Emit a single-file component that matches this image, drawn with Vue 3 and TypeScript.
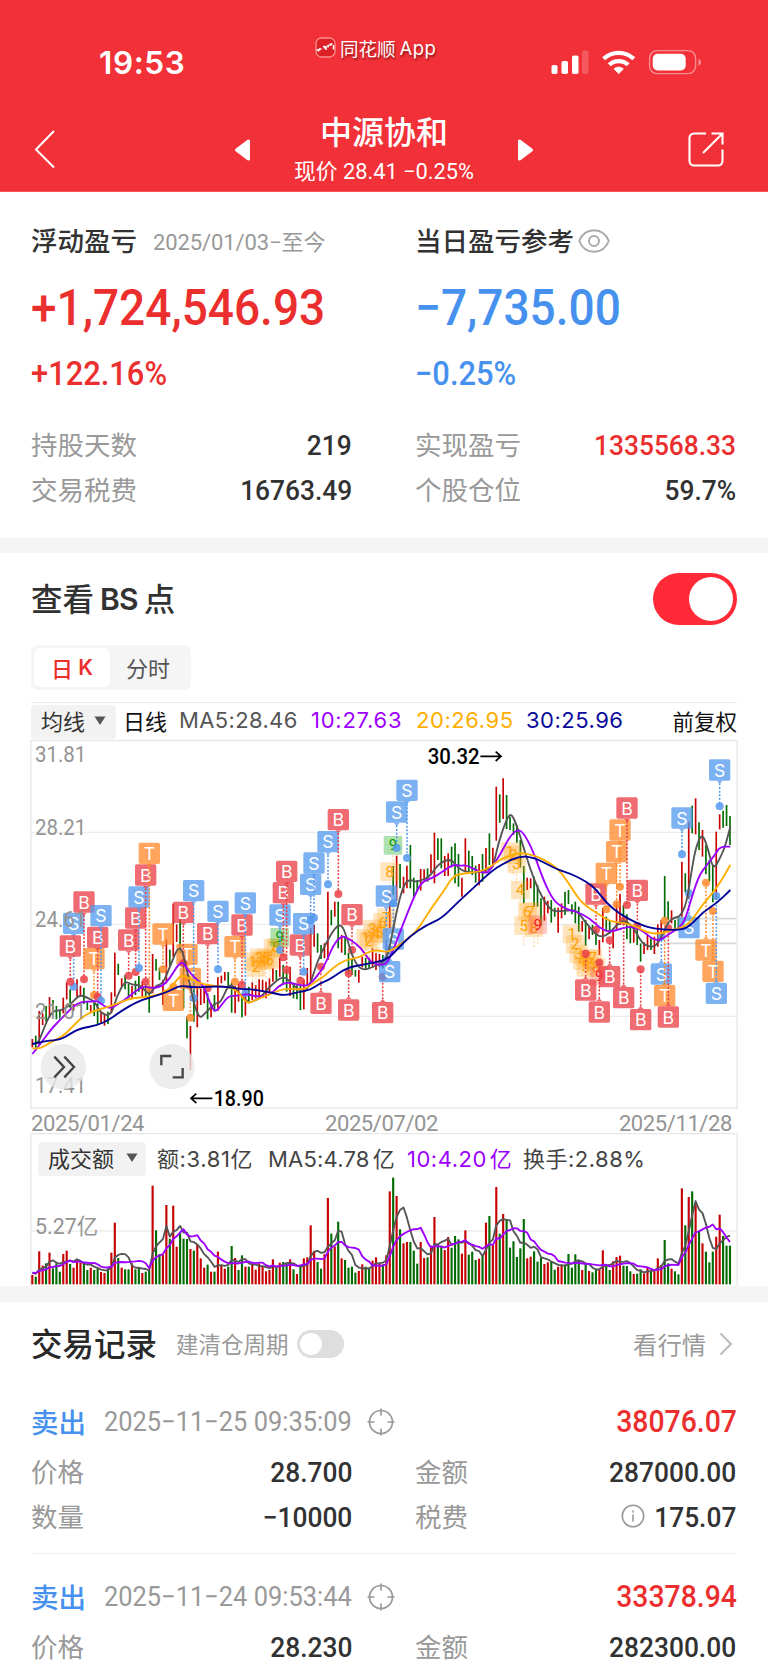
<script setup lang="ts">
type Pt = [number, number]
type Side = 'R' | 'G'
interface Marker { kind: 'B' | 'S' | 'T'; x: number; y: number; dot: number }
interface Count { n: number; x: number; y: number; tone: 'amber' | 'green' | 'red' }
interface TradeRecord { time: string; profit: string; price: string; amount: string; qty?: string; fee?: string }

// One bar every 10.31 chart units; three units make one CSS pixel.
const barX = (i: number): number => 37 + 10.31 * i

const candleText = `R927-952 G917-962 R843-945 R850-885 G828-875 R801-862 G810-855 G828-868 G842-868 R803-850
R757-808 G778-833 R822-842 R748-800 R767-795 G773-822 G815-840 R825-845 G815-858 G820-885
R845-882 R855-887 G845-882 R787-850 R668-800 G701-735 R745-770 G735-778 G762-805 R768-805
G752-795 G738-785 R753-800 G763-798 G768-848 R672-790 G687-722 G713-750 R750-825 R628-760
G659-708 R522-680 R583-636 G541-670 G675-835 G860-925 R888-1020 G758-875 R770-892 R775-825
R775-820 G790-868 R820-862 G795-845 R742-842 R737-760 R726-752 G726-770 G757-848 R768-850
R762-815 G800-862 R775-857 G770-820 R757-810 R765-805 R748-808 R750-785 R755-805 R745-790
R715-755 G720-750 R684-740 G705-765 G718-785 R710-798 G760-805 G765-808 G768-840 R748-838
R714-765 R595-755 R585-650 G610-668 G645-687 R640-685 R485-690 G540-586 R515-560 G515-655
R615-668 G620-675 G668-730 G685-735 G720-740 R720-758 R680-712 G684-720 G683-715 R655-710
R670-720 R672-712 G675-715 R630-712 R487-595 G408-495 R377-512 G402-475 R440-490 R407-475
G345-475 G443-500 G450-485 R417-482 R418-450 G415-455 R373-430 R308-460 G325-390 G325-415
R378-438 R370-438 G350-412 G340-460 G372-470 R443-500 R325-425 G362-430 G378-435 G407-458
R402-466 G372-455 R354-430 G310-405 R353-410 R170-332 G193-278 R145-267 G195-297 G260-300
G280-315 G285-338 G330-413 G408-520 R443-480 R445-475 G440-530 G465-530 G505-587 R500-572
R512-550 G510-578 G533-560 R533-608 R520-565 G485-555 G480-522 G523-553 G515-580 G530-605
R573-605 G570-647 R590-628 G585-615 G597-645 R630-675 R534-637 G560-600 G570-612 R595-655
R520-602 R492-585 G525-570 G553-628 G585-640 R590-638 G585-645 G640-695 R637-672 R615-660
G625-660 R620-672 R583-650 R570-625 G438-565 G514-570 R541-580 G570-597 G565-600 R395-560
G430-487 R275-505 G227-310 R205-313 G277-360 R300-380 G345-433 G390-455 G405-517 R305-510
R253-298 G242-293 G225-288 G258-345`
const candles = candleText.split(/\s+/).map((t, i) => {
  const [hi, lo] = t.slice(1).split('-').map(Number)
  return { x: barX(i), hi, lo, side: t[0] as Side }
})

const volumeText = `R525 G530 R454 R497 G490 R458 G505 G490 G515 R462 R452 G492 R503 R480 R487 G490 G510 R503 G510 G505
R516 R519 G505 R458 R368 G474 R503 G508 G508 R490 G508 G503 R519 G515 G512 R257 G391 G462 R465 R315
G416 R317 R440 G400 G416 G417 R447 G452 R435 R475 R503 G494 R515 G515 R455 R497 R506 G500 G438 R474
G510 G466 R500 G500 R492 R509 R490 R500 R514 R510 R478 G503 R488 G486 G490 R478 G508 R522 G500 R475
R472 R376 R453 G486 G506 R463 R294 G401 R440 G365 R475 G480 G503 G500 G518 R513 R493 G500 G503 R482
R472 R490 G493 R466 R274 G233 R288 G388 R430 R426 G426 G452 G491 R426 R474 G472 R437 R351 G434 G437
R450 R411 G443 G408 G418 R461 R391 G464 G455 G480 R476 G468 R368 G348 R435 R261 G401 R342 G358 G443
G424 G471 G445 G357 R475 R470 G454 G485 G474 R492 R487 G485 G509 R500 R497 G494 G462 G503 G463 G482
R510 G492 R513 G517 G510 R508 R451 G496 G510 R484 R471 R467 G497 G498 G514 R522 G521 G508 R520 R502
G514 R512 R475 R495 G420 G490 R506 G514 G523 R265 G376 R291 G274 R310 G392 R430 G455 G487 G455 R410
R344 G408 G437 G437`
const volumes = volumeText.split(/\s+/).map((t, i) => ({ x: barX(i), top: Number(t.slice(1)), side: t[0] as Side }))

function average(span: number): string {
  return volumes
    .map((v, i) => {
      let sum = 0
      for (let k = i - span + 1; k <= i; k++) sum += k < 0 ? 517 : volumes[k].top
      return `${v.x.toFixed(1)},${(sum / span).toFixed(1)}`
    })
    .join(' ')
}
const volMa5 = average(5)
const volMa10 = average(10)

function parse(dx: number, text: string): Pt[] {
  return text.split(' ').map((p) => {
    const [x, y] = p.split(',').map(Number)
    return [x + dx, y]
  })
}
// Quadratic segments through the midpoints keep the averages smooth.
function curve(left: string, mid: string, right: string): string {
  const pts = [...parse(0, left), ...parse(690, mid), ...parse(1410, right)].sort((a, b) => a[0] - b[0])
  let d = `M${pts[0][0]} ${pts[0][1]}`
  for (let i = 1; i < pts.length - 1; i++) {
    const mx = (pts[i][0] + pts[i + 1][0]) / 2
    const my = (pts[i][1] + pts[i + 1][1]) / 2
    d += `Q${pts[i][0]} ${pts[i][1]} ${mx} ${my}`
  }
  const end = pts[pts.length - 1]
  return `${d}L${end[0]} ${end[1]}`
}
const lines = [
  { cls: 'ma5', d: curve(
    '37,940 52,945 68,905 84,865 100,842 125,842 150,825 178,794 200,802 225,815 240,848 272,860 290,800 315,752 335,765 362,765 388,798 405,768 428,762 448,715 480,636 500,715 533,872 560,845 585,820 602,818 625,765 640,768 665,800 685,815',
    '0,818 30,805 60,768 100,736 125,760 160,792 180,765 200,700 225,645 255,592 275,583 290,620 305,675 325,712 345,720 365,712 410,695 425,620 445,520 462,462 480,448 500,457 540,440 560,407 600,383 625,415 650,427 690,427 720,415',
    '8,415 25,340 45,280 62,246 80,285 100,350 120,415 145,480 170,525 190,545 230,542 260,540 285,575 310,605 330,622 355,613 385,580 405,570 430,592 455,638 475,650 497,650 520,610 535,575 555,562 570,560 590,520 605,420 618,350 637,308 655,360 670,420 690,385 705,350 721,290') },
  { cls: 'ma10', d: curve(
    '37,972 55,950 95,895 130,860 160,828 185,815 215,815 235,812 250,828 272,835 290,825 320,805 345,785 370,768 395,775 425,770 450,745 470,710 487,694 500,715 520,740 550,765 570,820 585,848 605,825 625,798 650,797 680,792',
    '0,795 25,800 60,795 95,760 125,758 145,765 175,768 200,740 225,705 250,645 275,616 300,628 335,655 360,695 385,705 410,703 430,660 460,580 490,505 515,455 545,445 575,427 610,403 630,408 650,405 680,422 710,430',
    '0,420 30,375 60,318 85,296 105,315 130,365 160,450 190,512 225,537 260,545 300,565 330,595 360,607 400,593 430,590 460,603 500,638 540,610 580,585 600,520 625,440 650,405 675,375 690,350 721,350') },
  { cls: 'ma20', d: curve(
    '37,955 60,957 90,937 125,922 155,893 185,862 215,845 250,835 290,822 330,805 390,800 430,790 460,765 483,733 510,747 540,760 580,768 620,770 650,780 680,818',
    '0,817 35,803 70,788 105,775 165,780 195,755 225,738 250,712 285,690 330,682 355,665 385,660 415,668 455,640 500,605 540,540 580,485 610,437 640,430 690,425',
    '0,412 35,385 85,368 120,372 160,388 200,412 230,450 265,505 290,530 325,552 360,575 400,578 440,590 470,608 510,612 545,600 580,592 605,572 640,520 680,475 721,405') },
  { cls: 'ma30', d: curve(
    '37,942 80,932 120,930 150,912 180,895 230,887 270,868 300,845 355,813 400,800 445,785 480,766 520,773 600,768 670,778',
    '0,777 50,785 75,790 102,797 150,785 180,780 210,760 240,748 290,713 345,703 410,690 440,660 480,618 530,585 575,565 620,520 680,465',
    '0,427 40,400 90,378 135,383 200,418 240,430 290,455 320,480 350,520 390,552 440,580 490,597 570,601 600,588 640,545 680,520 721,480') },
]

function marks(text: string): Marker[] {
  return text.trim().split(/\s+/).map((t) => {
    const [kind, x, y, dot] = t.split(',')
    return { kind: kind as Marker['kind'], x: Number(x), y: Number(y), dot: Number(dot) }
  })
}
const markers = marks(`
S,161,580,770 B,151,648,755 B,192,516,748 T,222,686,795 B,233,622,800 S,243,557,812 B,326,630,737 B,347,564,726
S,357,501,714 B,377,435,755 T,388,370,780 T,429,612,718 T,511,745,863 T,501,673,745 T,460,811,770 B,490,547,700
S,521,482,805 B,563,611,775 S,594,544,718 T,645,650,755 B,666,585,764 S,676,519,790
S,780,555,660 B,790,488,682 B,800,424,720 B,841,645,752 S,851,581,725 S,872,463,570 S,882,399,563 S,924,335,463
B,955,269,492 B,996,554,660 B,903,820,710 B,986,840,730 B,1088,848,740 S,1109,725,660 S,1099,498,690 S,1120,627,520
S,1130,246,354 S,1161,181,384
B,1728,492,600 T,1759,430,538 T,1790,365,523 T,1800,300,470 B,1821,234,525 B,1852,481,588 B,1697,780,671 B,1738,846,698
B,1769,740,631 B,1811,803,572 B,1862,869,718 S,1924,732,620 T,1934,797,572 B,1945,861,595 S,1986,264,373 S,2007,593,490
T,2058,660,458 T,2079,724,543 S,2089,790,498 S,2099,120,229`)

function run(ninth: Count['tone'], pts: Pt[]): Count[] {
  return pts.map(([x, y], i) => ({ n: i + 1, x, y, tone: i === 8 ? ninth : 'amber' }))
}
const counts: Count[] = [
  ...run('green', [[698, 695], [708, 712], [718, 683], [728, 692], [738, 685], [749, 690], [759, 655], [769, 652], [779, 622]]),
  ...run('green', [[1037, 625], [1047, 634], [1057, 597], [1068, 612], [1078, 610], [1088, 578], [1099, 563], [1109, 425], [1119, 346]]),
  ...run('red', [[1470, 365], [1480, 375], [1490, 402], [1501, 480], [1511, 587], [1522, 545], [1532, 546], [1542, 593], [1553, 584]]),
  ...run('red', [[1656, 612], [1666, 643], [1676, 672], [1687, 692], [1697, 712], [1707, 688], [1718, 685], [1728, 712], [1738, 738]]),
]

const axis = [
  { text: '31.81', y: 97 },
  { text: '28.21', y: 315 },
  { text: '24.61', y: 592 },
  { text: '21.01', y: 868 },
  { text: '17.41', y: 1088 },
]

const records: TradeRecord[] = [
  { time: '2025−11−25 09:35:09', profit: '38076.07', price: '28.700', amount: '287000.00', qty: '−10000', fee: '175.07' },
  { time: '2025−11−24 09:53:44', profit: '33378.94', price: '28.230', amount: '282300.00' },
]
</script>

<template>
  <main class="page">
    <header class="top">
      <div class="status">
        <span class="clock">19:53</span>
        <span class="brand">
          <svg width="21" height="21" viewBox="0 0 21 21">
            <rect x="1" y="1" width="19" height="19" rx="5.5" fill="#dd1f26" stroke="#ff8f90" stroke-width="1.3" />
            <path d="M1.500 13h2v1.500M4.500 13.500v-1.500h2M8 9.500h1.500v2M11 9v4M13 10.500v-2h1M15 9V7.500h1.500v-1.500M18.500 8v4.500" fill="none" stroke="#fff" stroke-width="1.500" />
          </svg>
          <span class="brand-cn">同花顺</span><span class="brand-en">App</span>
        </span>
        <svg class="signals" width="152" height="26" viewBox="0 0 152 26" fill="#fff">
          <rect x="0.500" y="16" width="6" height="9" rx="1.800" />
          <rect x="10.500" y="12" width="6.500" height="13" rx="1.800" />
          <rect x="21" y="6.500" width="6.500" height="18.500" rx="1.800" />
          <rect x="31" y="1.500" width="6.500" height="23.500" rx="1.800" opacity=".2" />
          <path d="M67.700 24.700l-4.800-4.800a7 7 0 0 1 9.600 0z" stroke="#fff" stroke-width=".6" />
          <path d="M58.200 15.800a14 14 0 0 1 19 0M52.600 9.800a22 22 0 0 1 30.200 0" fill="none" stroke="#fff" stroke-width="4.200" />
          <rect x="98.600" y="1.600" width="46" height="23" rx="7.500" fill="none" stroke="#fff" stroke-width="1.400" opacity=".45" />
          <rect x="101.700" y="4.700" width="33" height="16.800" rx="5" />
          <path d="M147.500 10v6.500q2.500-1 2.500-3.200t-2.500-3.300z" opacity=".5" />
        </svg>
      </div>
      <div class="nav">
        <svg class="back" width="24" height="40" viewBox="0 0 24 40"><path d="M20 2L2 20.500 20 38.500" fill="none" stroke="#fff" stroke-width="2" /></svg>
        <svg class="prev" width="18" height="24" viewBox="0 0 18 24"><path d="M2.500 12L14.500 3v18z" fill="#fff" stroke="#fff" stroke-width="3" stroke-linejoin="round" /></svg>
        <div class="stock">
          <h1>中源协和</h1>
          <p>现价 28.41 −0.25%</p>
        </div>
        <svg class="next" width="18" height="24" viewBox="0 0 18 24"><path d="M15.500 12L3.500 3v18z" fill="#fff" stroke="#fff" stroke-width="3" stroke-linejoin="round" /></svg>
        <svg class="share" width="36" height="36" viewBox="0 0 36 36" fill="none" stroke="#fff" stroke-width="2.100">
          <path d="M18 1.500H6A4.500 4.500 0 0 0 1.500 6v23A4.500 4.500 0 0 0 6 33.500h24a4.500 4.500 0 0 0 4.500-4.500V17.500M23.500 1.500h11v11M34 2L15 21" />
        </svg>
      </div>
    </header>

    <section class="summary">
      <div class="col">
        <div class="head"><b>浮动盈亏</b><span class="since">2025/01/03−至今</span></div>
        <div class="big red">+1,724,546.93</div>
        <div class="pct red">+122.16%</div>
        <div class="row"><span>持股天数</span><em>219</em></div>
        <div class="row"><span>交易税费</span><em>16763.49</em></div>
      </div>
      <div class="col">
        <div class="head">
          <b>当日盈亏参考</b>
          <svg class="eye" width="32" height="24" viewBox="0 0 32 24" fill="none" stroke="#aaa" stroke-width="2">
            <path d="M1.200 12C4 5 9.500 1.200 16 1.200S28 5 30.800 12C28 19 22.500 22.800 16 22.800S4 19 1.200 12z" />
            <circle cx="16" cy="12" r="5" />
          </svg>
        </div>
        <div class="big blue">−7,735.00</div>
        <div class="pct blue">−0.25%</div>
        <div class="row"><span>实现盈亏</span><em class="red">1335568.33</em></div>
        <div class="row"><span>个股仓位</span><em>59.7%</em></div>
      </div>
    </section>

    <section class="chart">
      <div class="chart-head">
        <h2><span>查看</span><span>BS</span><span>点</span></h2>
        <i class="switch on"></i>
      </div>
      <div class="tabs"><span class="tab active">日<b>K</b></span><span class="tab">分时</span></div>
      <div class="legend">
        <span class="pick">均线<svg width="12" height="10" viewBox="0 0 12 10"><path d="M.5.500h11L6 9z" fill="#555" /></svg></span>
        <span class="black day">日线</span>
        <span class="lg1">MA5:28.46</span>
        <span class="lg2">10:27.63</span>
        <span class="lg3">20:26.95</span>
        <span class="lg4">30:25.96</span>
        <span class="black adj">前复权</span>
      </div>

      <svg class="kline" width="708" height="369" viewBox="30 30 2124 1107">
        <path class="grid" d="M33 307H2150M33 583H2150M33 859H2150" />
        <path class="quote" d="M1930 566H2150M1930 640H2150" />
        <rect class="frame" x="32.500" y="31.500" width="2119" height="1103" />
        <g class="candles">
          <line v-for="(c, i) in candles" :key="i" :class="c.side" :x1="c.x" :x2="c.x" :y1="c.hi" :y2="c.lo" />
        </g>
        <g v-for="c in counts" :key="'c' + c.x" :class="['count', c.tone]">
          <rect :x="c.x - 28" :y="c.y - 28" width="56" height="56" rx="4" />
          <line :x1="c.x" :x2="c.x" :y1="c.y + 30" :y2="c.y + 60" />
          <text :x="c.x" :y="c.y + 15">{{ c.n }}</text>
        </g>
        <g v-for="(m, i) in markers" :key="'m' + i" :class="['mark', m.kind]">
          <line :x1="m.x" :x2="m.x" :y1="m.y + (m.dot > m.y ? 40 : -40)" :y2="m.dot" />
          <circle :cx="m.x" :cy="m.dot" r="12" />
          <g class="tag">
            <rect :x="m.x - 32" :y="m.y - 32" width="64" height="64" rx="5" />
            <path v-if="m.dot > m.y" :d="`M${m.x - 9} ${m.y + 32}h18l-9 9z`" />
            <path v-else :d="`M${m.x - 9} ${m.y - 32}h18l-9 -9z`" />
          </g>
          <text :x="m.x" :y="m.y + 20">{{ m.kind }}</text>
        </g>
        <path v-for="l in lines" :key="l.cls" :class="['avg', l.cls]" :d="l.d" />
        <g class="axis">
          <text v-for="a in axis" :key="a.text" x="45" :y="a.y" textLength="154" lengthAdjust="spacingAndGlyphs">{{ a.text }}</text>
        </g>
        <g class="extreme">
          <text x="1223" y="101" textLength="156" lengthAdjust="spacingAndGlyphs">30.32</text>
          <path d="M1381 79h62M1427 65l16 14-16 14" />
          <text x="581" y="1127" textLength="151" lengthAdjust="spacingAndGlyphs">18.90</text>
          <path d="M577 1105h-64M529 1091l-16 14 16 14" />
        </g>
        <g class="ctl">
          <circle cx="130" cy="1010" r="68" />
          <path d="M103 980l29 31-29 31M133 980l29 31-29 31" />
          <circle cx="456" cy="1010" r="68" />
          <path d="M424 1006v-28h30M458 1042h30v-28" />
        </g>
      </svg>

      <div class="dates"><span>2025/01/24</span><span>2025/07/02</span><span>2025/11/28</span></div>

      <div class="volume">
        <svg class="bars" width="708" height="153" viewBox="30 99 2124 459">
          <path class="grid" d="M33 393H2150" />
          <path class="frame" d="M32.500 558V101H2151.500V558" />
          <rect v-for="(v, i) in volumes" :key="i" :class="v.side" :x="v.x - 3.2" :y="v.top" width="6.400" :height="553 - v.top" />
          <polyline class="avg ma5" :points="volMa5" />
          <polyline class="avg ma10" :points="volMa10" />
          <text class="vol-label" x="45" y="403" textLength="189" lengthAdjust="spacingAndGlyphs">5.27亿</text>
        </svg>
        <div class="vol-legend">
          <span class="pick wide">成交额<svg width="12" height="10" viewBox="0 0 12 10"><path d="M.5.500h11L6 9z" fill="#555" /></svg></span>
          <span class="v1">额:3.81亿</span>
          <span class="v2">MA5:4.78<i>亿</i></span>
          <span class="v3">10:4.20<i>亿</i></span>
          <span class="v4">换手:2.88%</span>
        </div>
      </div>
    </section>

    <section class="trades">
      <div class="trades-head">
        <h2>交易记录</h2>
        <span class="cycle">建清仓周期</span>
        <i class="switch small"></i>
        <span class="more">看行情</span>
        <svg width="14" height="24" viewBox="0 0 14 24"><path d="M1.500 1.500L12 12 1.500 22.500" fill="none" stroke="#bbb" stroke-width="2" /></svg>
      </div>
      <article v-for="r in records" :key="r.time" class="record">
        <div class="record-head">
          <b>卖出</b>
          <time><span>{{ r.time }}</span></time>
          <svg width="28" height="28" viewBox="0 0 28 28" fill="none" stroke="#999" stroke-width="1.700">
            <circle cx="14" cy="14" r="11.500" />
            <path d="M14 .5v7M14 20.500v7M.5 14h7M20.500 14h7" />
          </svg>
          <em class="profit">{{ r.profit }}</em>
        </div>
        <div class="pair">
          <div class="row"><span>价格</span><em>{{ r.price }}</em></div>
          <div class="row"><span>金额</span><em>{{ r.amount }}</em></div>
        </div>
        <div v-if="r.qty" class="pair">
          <div class="row"><span>数量</span><em>{{ r.qty }}</em></div>
          <div class="row fee">
            <span>税费</span>
            <svg class="info" width="24" height="24" viewBox="0 0 24 24" fill="none" stroke="#999" stroke-width="1.600">
              <circle cx="12" cy="12" r="10.700" />
              <path d="M12 10.500v7M12 6.500v2" />
            </svg>
            <em>{{ r.fee }}</em>
          </div>
        </div>
      </article>
    </section>
  </main>
</template>

<style>
html, body { margin: 0; background: #fff; overflow: hidden; }
</style>

<style scoped>
* { box-sizing: border-box; }
.page { width: 768px; height: 1670px; overflow: hidden; background: #fff; color: #323232; font-family: Roboto, "Noto Sans CJK SC", sans-serif; }
svg { display: block; flex: none; overflow: visible; }
h1, h2, p { margin: 0; }
em, i { font-style: normal; }
span, b, em, time { white-space: nowrap; }
.red { color: #eb2f2f !important; }
.blue { color: #4691ee; }

.top { height: 192px; background: #f23038; color: #fff; border-bottom: 1px solid #f4545a; }
.status { display: flex; height: 96px; padding: 35px 65px 0 99px; }
.clock { width: 217px; padding-top: 4px; font: 600 31.500px/48px Inter, sans-serif; letter-spacing: .6px; }
.brand { display: flex; align-items: center; width: 237px; height: 25px; text-shadow: 1px 2px 2px rgba(70, 0, 0, .55); font-size: 18.500px; }
.brand-cn { margin-left: 4px; }
.brand-en { margin-left: 4px; font: 400 18.500px Inter, sans-serif; letter-spacing: .4px; }
.signals { margin-top: 14px; }
.nav { display: flex; height: 95px; padding-left: 34px; }
.back { margin-top: 33px; }
.prev { margin: 42px 0 0 176px; }
.stock { width: 230px; margin-left: 17px; text-align: center; padding-top: 10px; }
.stock h1 { font: 500 32px/48px "Noto Sans CJK SC", sans-serif; }
.stock p { margin-top: 3px; font-size: 21.800px; line-height: 30px; }
.next { margin: 42px 0 0 17px; }
.share { margin: 36px 0 0 154px; }

.summary { display: flex; height: 361px; padding: 26px 31px 0; border-bottom: 15px solid #f5f5f5; }
.col { width: 321px; margin-right: 63px; flex: none; }
.head { display: flex; height: 46px; align-items: center; }
.head b { padding-bottom: 3px; font: 500 26.500px "Noto Sans CJK SC", sans-serif; }
.since { margin-left: 16px; padding-bottom: 3px; font-size: 22px; color: #999; letter-spacing: -.1px; }
.eye { margin-left: 4px; }
.big { height: 86px; line-height: 89px; font-size: 50px; font-weight: 500; transform: scaleX(.92); transform-origin: 0 50%; white-space: nowrap; }
.pct { height: 71px; line-height: 47px; font-size: 33px; font-weight: 500; transform: scaleX(.935); transform-origin: 0 50%; }
.row { display: flex; align-items: center; width: 321px; height: 45px; font-size: 26.500px; color: #999; }
.row span { margin-right: auto; padding-bottom: 1px; }
.row em { padding-top: 3px; font-size: 28px; font-weight: 500; color: #323232; transform: scaleX(.94); transform-origin: 100% 50%; }

.chart { height: 749px; border-bottom: 16px solid #f5f5f5; padding: 0 30px; }
.chart-head { display: flex; justify-content: space-between; padding-top: 20px; height: 92px; }
h2 { display: flex; gap: 6px; font: 500 31.500px/49px "Noto Sans CJK SC", sans-serif; }
.chart-head h2 { margin-left: 1px; }
.chart-head h2 span:nth-child(2) { font: 600 30px/52px Inter, sans-serif; letter-spacing: -.8px; }
.switch { display: block; width: 84px; height: 52px; border-radius: 26px; background: #ff2938; margin-right: 1px; padding: 4px; }
.switch::after { content: ""; display: block; width: 44px; height: 44px; border-radius: 50%; background: #fff; margin-left: auto; }
.tabs { display: flex; width: 160px; height: 45px; padding: 3px; border-radius: 7px; background: #f5f5f5; margin-left: 1px; }
.tab { display: flex; justify-content: center; align-items: center; gap: 5px; width: 76px; padding-bottom: 2px; font: 400 22px "Noto Sans CJK SC", sans-serif; color: #555; }
.tab.active { background: #fff; border-radius: 6px; color: #eb2f2f; font-weight: 500; }
.tab b { padding-top: 1px; font: 600 21px Inter, sans-serif; }
.legend { display: flex; align-items: center; height: 38px; margin: 12px 0 0 1px; width: 706px; border-top: 1px solid #e8e8e8; font: 400 22px Inter, "Noto Sans CJK SC", sans-serif; }
.legend > span { padding-bottom: 3px; }
.pick { display: flex; align-items: center; justify-content: space-between; width: 85px; height: 34px; padding: 0 10px 3px; background: #f2f2f2; border-radius: 4px; color: #333; font: 400 22px "Noto Sans CJK SC", sans-serif; }
.pick svg { margin-top: 2px; }
.black { color: #111; }
.day { width: 56px; margin-left: 7px; }
.lg1 { width: 132px; color: #555; letter-spacing: .35px; }
.lg2 { width: 105px; color: #9d00ff; letter-spacing: .75px; }
.lg3 { width: 110px; color: #ffae00; letter-spacing: .55px; }
.lg4 { color: #0a0a9c; letter-spacing: .5px; }
.adj { margin-left: auto; font-size: 21.500px; }
.grid { stroke: #ececec; stroke-width: 4; fill: none; }
.quote { stroke: #dadada; stroke-width: 5; }
.frame { fill: none; stroke: #e7e7e7; stroke-width: 4; }
.candles line { stroke-width: 5; }
line.R { stroke: #c60000; }
line.G { stroke: #006b00; }
rect.R { fill: #c60000; }
rect.G { fill: #006b00; }
.avg { fill: none; stroke-width: 5.600; stroke-linejoin: round; }
.ma5 { stroke: #555; }
.ma10 { stroke: #9d00ff; }
.ma20 { stroke: #ffae00; }
.ma30 { stroke: #000096; }
.mark text { fill: #fff; font: 400 53px Inter, sans-serif; text-anchor: middle; }
.mark line { stroke-width: 4.600; stroke-dasharray: 6 5; }
.mark circle { opacity: .85; }
.tag { opacity: .76; }
.B { fill: #eb4046; stroke: none; }
.S { fill: #559aef; }
.T { fill: #ff8a2b; }
.B line { stroke: #eb4046; }
.S line { stroke: #559aef; }
.T line { stroke: #ff8a2b; }
.count text { font: 400 45px Roboto, sans-serif; text-anchor: middle; fill: #ff9e00; }
.count rect { fill: #ffa31a; opacity: .28; }
.count line { stroke: #ffb84d; stroke-width: 4; stroke-dasharray: 6 5; opacity: .5; }
.green rect { fill: #1aa81a; opacity: .35; }
.green text { fill: #009c00; }
.count.red rect { fill: #ff4a3a; opacity: .3; }
.count.red text { fill: #f02020; }
.axis text { font: 400 66px Roboto, sans-serif; fill: #949494; }
.extreme text { font: 500 65px Roboto, sans-serif; fill: #000; }
.extreme path { fill: none; stroke: #000; stroke-width: 5; }
.ctl circle { fill: #e8e8e8; opacity: .8; }
.ctl path { fill: none; stroke: #444; stroke-width: 7; }
.dates { display: flex; justify-content: space-between; height: 24px; padding: 0 6px 0 1px; font-size: 22px; line-height: 29px; letter-spacing: -.4px; color: #949494; }
.volume { display: grid; }
.volume > * { grid-area: 1 / 1; }
.vol-legend { display: flex; align-items: center; height: 35px; margin: 8px 0 0 8px; color: #444; font: 400 22px Inter, "Noto Sans CJK SC", sans-serif; }
.vol-legend > span:not(.pick) { padding-bottom: 4px; }
.wide { width: 108px; padding: 0 8px 3px 10px; }
.v1 { width: 111px; margin-left: 11px; letter-spacing: .6px; }
.v2 { width: 139px; letter-spacing: .2px; }
.v3 { width: 116px; color: #9d00ff; letter-spacing: .5px; }
.v4 { letter-spacing: .5px; }
.vol-legend i { margin-left: 3px; }
.vol-label { font: 400 66px Roboto, "Noto Sans CJK SC", sans-serif; fill: #949494; }

.trades { padding: 0 31px; }
.trades-head { display: flex; align-items: center; height: 84px; color: #999; }
.trades-head h2 { color: #282828; width: 145px; padding-bottom: 3px; font-weight: 500; }
.cycle { width: 121px; padding-bottom: 2px; font-size: 22.500px; }
.small { width: 47px; height: 28px; padding: 3px; background: #dedede; }
.small::after { width: 22px; height: 22px; margin-left: 0; }
.more { margin: 0 13px 0 auto; padding-bottom: 2px; font-size: 24.300px; }
.trades-head svg { margin-right: 4px; }
.record { height: 167px; padding-top: 8px; }
.record + .record { border-top: 1px solid #efefef; padding-top: 15px; }
.record-head { display: flex; align-items: center; height: 54px; padding-top: 1px; }
.record-head b { width: 73px; padding-bottom: 2px; font: 500 27.500px "Noto Sans CJK SC", sans-serif; color: #4691ee; }
.record-head time { width: 263px; font-size: 27.200px; color: #999; }
.record-head time span { display: inline-block; transform: scaleX(.935); transform-origin: 0 50%; }
.profit { margin-left: auto; color: #eb2f2f; font-size: 31px; font-weight: 500; transform: scaleX(.915); transform-origin: 100% 50%; }
.pair { display: flex; gap: 63px; }
.info { margin-right: 4px; }
</style>
